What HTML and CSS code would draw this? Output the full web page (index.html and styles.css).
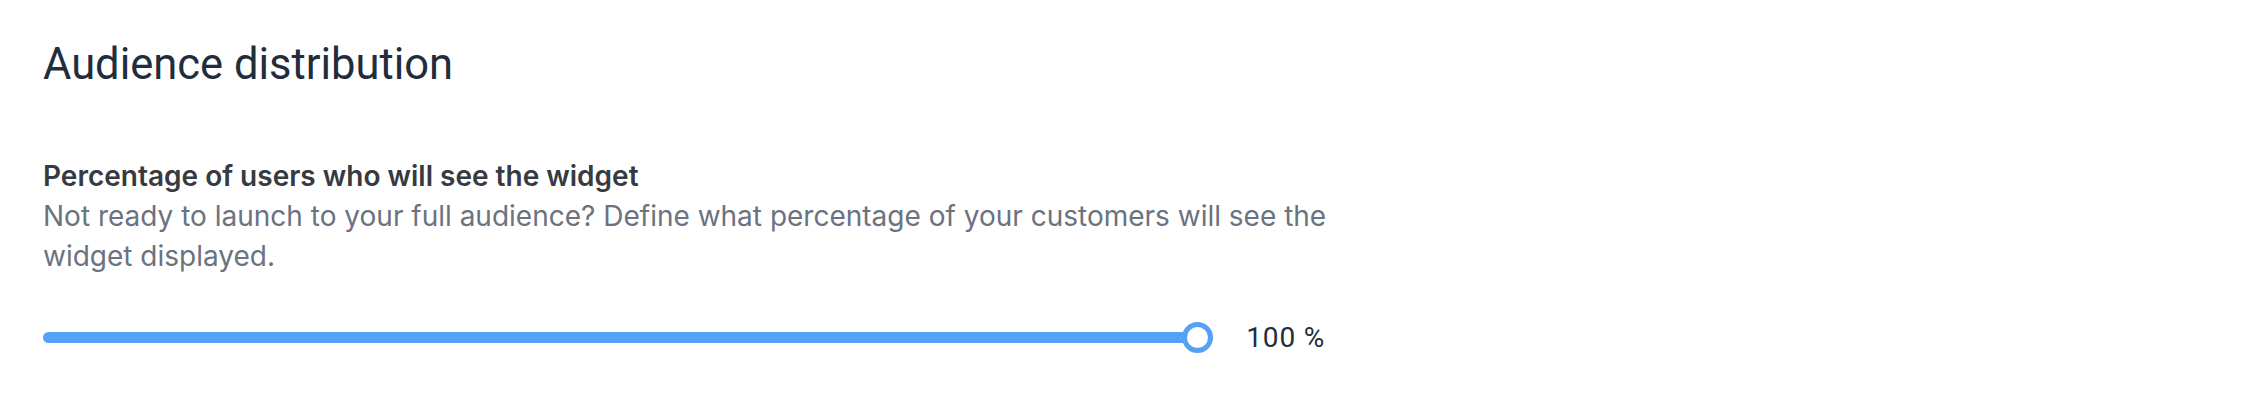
FILE: index.html
```html
<!DOCTYPE html>
<html>

<head>
  <title>Audience distribution</title>
  <link rel="stylesheet" href="styles.css">
</head>

<body>
  <div class="container">
    <h1>Audience distribution</h1>

    <div class="field">
      <p class="field-label">Percentage of users who will see the widget</p>
      <p class="field-help">Not ready to launch to your full audience? Define what percentage of your customers will see the widget displayed.</p>

      <div class="slider-row">
        <input type="range" class="slider" id="audience" min="0" max="100" value="100">
        <span class="slider-value"><span id="audience-value">100</span> %</span>
      </div>
    </div>
  </div>

  <script>
    const slider = document.getElementById('audience');
    const sliderValue = document.getElementById('audience-value');

    slider.addEventListener('input', () => {
      sliderValue.textContent = slider.value;
    });
  </script>
</body>

</html>
```

FILE: styles.css
```css
body {
  font-family: Inter, "Noto Sans", sans-serif;
  margin: 0;
  padding: 0;
  background-color: #fff;
}

.container {
  width: 1290px;
  padding: 40px 43px;
}

h1 {
  font-family: Roboto, "Liberation Sans", sans-serif;
  font-size: 43.5px;
  font-weight: 400;
  line-height: 50px;
  margin: 0;
  color: #1f2d3d;
}

.field {
  margin-top: 66px;
}

.field-label {
  margin: 0;
  font-size: 28px;
  font-weight: 600;
  line-height: 40px;
  color: #373a41;
}

.field-help {
  margin: 0;
  font-size: 28px;
  line-height: 40px;
  color: #6b7280;
}

.slider-row {
  display: flex;
  align-items: center;
  gap: 33px;
  height: 31px;
  margin-top: 46px;
  padding-right: 8px;
}

.slider {
  -webkit-appearance: none;
  appearance: none;
  flex: 1;
  margin: 0;
  height: 31px;
  background: transparent;
  cursor: pointer;
}

.slider::-webkit-slider-runnable-track {
  height: 11px;
  border-radius: 6px;
  background-color: #55a1f6;
}

.slider::-webkit-slider-thumb {
  -webkit-appearance: none;
  box-sizing: border-box;
  width: 31px;
  height: 31px;
  margin-top: -10px;
  border: 5px solid #55a1f6;
  border-radius: 50%;
  background-color: #fff;
}

.slider-value {
  font-family: Roboto, "Liberation Sans", sans-serif;
  font-size: 28px;
  letter-spacing: 0.8px;
  color: #1f2d3d;
  white-space: nowrap;
}
```
